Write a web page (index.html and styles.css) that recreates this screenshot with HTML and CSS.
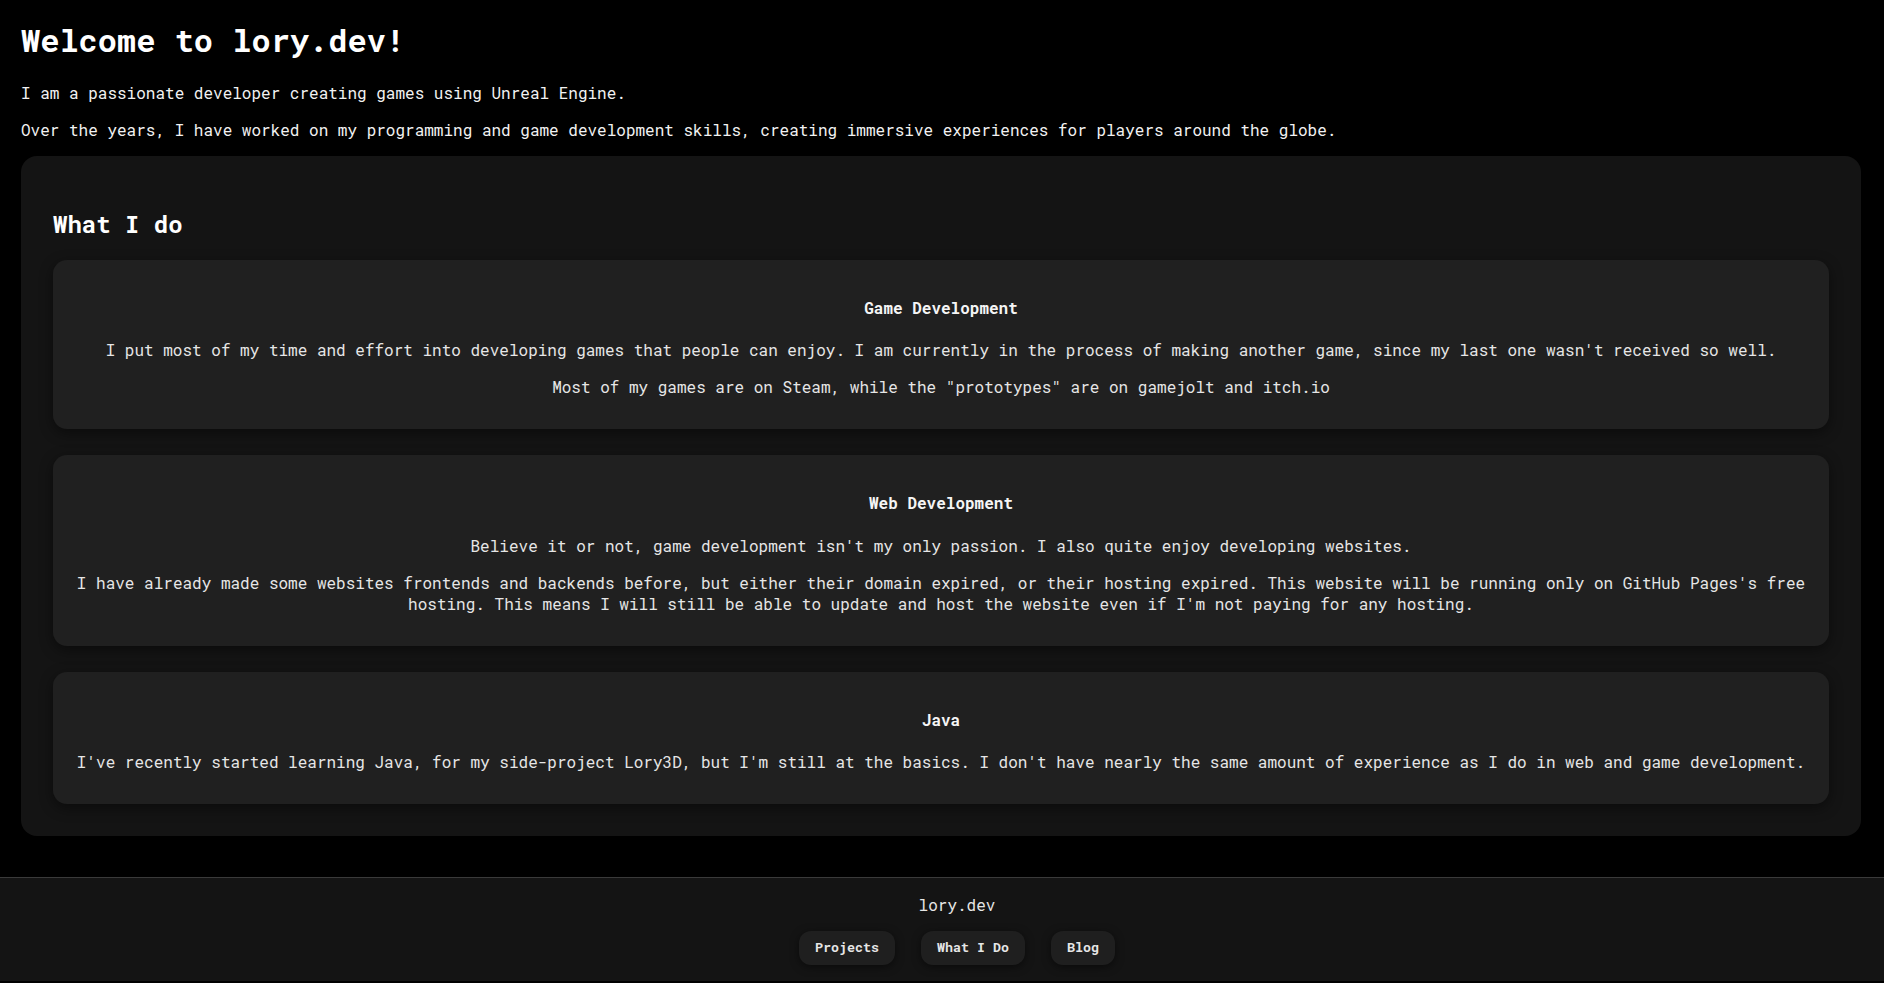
FILE: index.html
```html
<!DOCTYPE html>
<html lang="en">
<head>
<meta charset="utf-8">
<title>lory.dev</title>
<link rel="stylesheet" href="styles.css">
</head>
<body>
<div class="page">
  <header class="intro">
    <h1 class="intro-title">Welcome to lory.dev!</h1>
    <p class="intro-text">I am a passionate developer creating games using Unreal Engine.</p>
    <p class="intro-text">Over the years, I have worked on my programming and game development skills, creating immersive experiences for players around the globe.</p>
  </header>

  <section class="panel">
    <h2 class="panel-title">What I do</h2>
    <div class="cards">
      <div class="card">
        <h4 class="card-title">Game Development</h4>
        <p class="card-text">I put most of my time and effort into developing games that people can enjoy. I am currently in the process of making another game, since my last one wasn't received so well.</p>
        <p class="card-text">Most of my games are on Steam, while the "prototypes" are on gamejolt and itch.io</p>
      </div>
      <div class="card">
        <h4 class="card-title">Web Development</h4>
        <p class="card-text">Believe it or not, game development isn't my only passion. I also quite enjoy developing websites.</p>
        <p class="card-text">I have already made some websites frontends and backends before, but either their domain expired, or their hosting expired. This website will be running only on GitHub Pages's free hosting. This means I will still be able to update and host the website even if I'm not paying for any hosting.</p>
      </div>
      <div class="card">
        <h4 class="card-title">Java</h4>
        <p class="card-text">I've recently started learning Java, for my side-project Lory3D, but I'm still at the basics. I don't have nearly the same amount of experience as I do in web and game development.</p>
      </div>
    </div>
  </section>
</div>

<footer class="footer">
  <p class="footer-brand">lory.dev</p>
  <nav class="footer-nav">
    <button class="nav-btn">Projects</button>
    <button class="nav-btn">What I Do</button>
    <button class="nav-btn">Blog</button>
  </nav>
</footer>
</body>
</html>
```

FILE: styles.css
```css
html, body {
  margin: 0;
  padding: 0;
  background: #000;
}

body {
  font-family: "Roboto Mono", "DejaVu Sans Mono", "Liberation Mono", monospace;
  font-size: 16px;
  line-height: 1.32;
  color: #ffffff;
}

.page {
  padding: 0 23px 0 21px;
}

.intro-title {
  font-size: 32px;
  font-weight: 700;
  margin: 18.5px 0 21.5px;
  color: #ffffff;
}

.intro-text {
  margin: 16px 0;
  color: #f2f2f2;
}

.panel {
  background: #141414;
  border-radius: 16px;
  padding: 32px;
  margin: 0 0 41px;
}

.panel-title {
  font-size: 24px;
  font-weight: 700;
  margin: 20.5px 0 19.5px;
  color: #ffffff;
}

.cards {
  display: flex;
  flex-direction: column;
  gap: 26px;
}

.card {
  background: #202020;
  border-radius: 14px;
  padding: 16px;
  text-align: center;
  box-shadow: 0 4px 14px rgba(0, 0, 0, 0.45);
}

.card-title {
  font-size: 16px;
  font-weight: 700;
  margin: 21px 0;
  color: #f5f5f5;
}

.card-text {
  margin: 16px 0;
  color: #e6e6e6;
}

.footer {
  background: #141414;
  border-top: 1px solid #3a3a3a;
  padding: 16px 0 16px 30px;
  text-align: center;
}

.footer-brand {
  margin: 0 0 16px;
  color: #e6e6e6;
}

.footer-nav {
  display: flex;
  justify-content: center;
  gap: 26px;
}

.nav-btn {
  font-family: "Roboto Mono", "DejaVu Sans Mono", "Liberation Mono", monospace;
  font-size: 13.33px;
  font-weight: 700;
  line-height: 1.32;
  color: #e6e6e6;
  background: #1f1f1f;
  border: none;
  border-radius: 12px;
  padding: 8px 16px;
  box-shadow: 0 2px 8px rgba(0, 0, 0, 0.5);
  cursor: pointer;
}
```
